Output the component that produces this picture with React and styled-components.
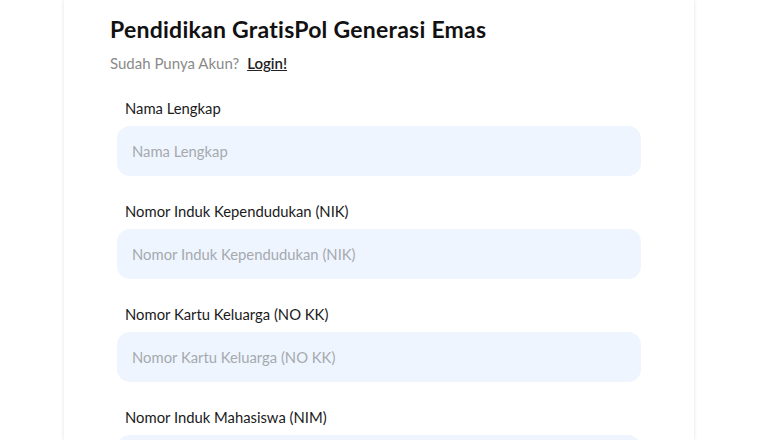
import React from 'react';
import styled, { createGlobalStyle } from 'styled-components';

const Global = createGlobalStyle`
  html, body {
    margin: 0;
    background: #ffffff;
    font-family: 'Lato', 'Noto Sans', sans-serif;
  }
`;

const Page = styled.div`
  display: flex;
  padding-left: 64px;
  height: 440px;
  overflow: hidden;
`;

const Card = styled.div`
  width: 630px;
  box-sizing: border-box;
  background: #fff;
  box-shadow: 0 0 4px rgba(0, 0, 0, 0.12);
  padding: 15px 53px 0 46px;
`;

const Title = styled.h1`
  margin: 0;
  font-size: 23px;
  font-weight: 700;
  color: #111;
  letter-spacing: 0.25px;
`;

const Sub = styled.p`
  margin: 11px 0 0;
  font-size: 15px;
  color: #8a8a8a;
  a {
    margin-left: 8px;
    color: #222;
    font-weight: 600;
    text-decoration: underline;
  }
`;

const Form = styled.form`
  display: flex;
  flex-direction: column;
  gap: 26px;
  margin: 27px 0 0 7px;
`;

const Field = styled.div`
  display: flex;
  flex-direction: column;
  gap: 9px;
`;

const Label = styled.label`
  padding-left: 8px;
  font-size: 14.8px;
  color: #1a1a1a;
`;

const Input = styled.input`
  height: 50px;
  box-sizing: border-box;
  border: none;
  border-radius: 13px;
  background: #eef5ff;
  padding: 0 15px;
  font-family: inherit;
  font-size: 14.8px;
  color: #222;
  outline: none;
  &::placeholder {
    color: #a6a9ae;
  }
`;

const fields = [
  'Nama Lengkap',
  'Nomor Induk Kependudukan (NIK)',
  'Nomor Kartu Keluarga (NO KK)',
  'Nomor Induk Mahasiswa (NIM)',
];

export default function App() {
  return (
    <>
      <Global />
      <Page>
        <Card>
          <Title>Pendidikan GratisPol Generasi Emas</Title>
          <Sub>
            Sudah Punya Akun?<a href="#">Login!</a>
          </Sub>
          <Form>
            {fields.map((f) => (
              <Field key={f}>
                <Label>{f}</Label>
                <Input placeholder={f} />
              </Field>
            ))}
          </Form>
        </Card>
      </Page>
    </>
  );
}
